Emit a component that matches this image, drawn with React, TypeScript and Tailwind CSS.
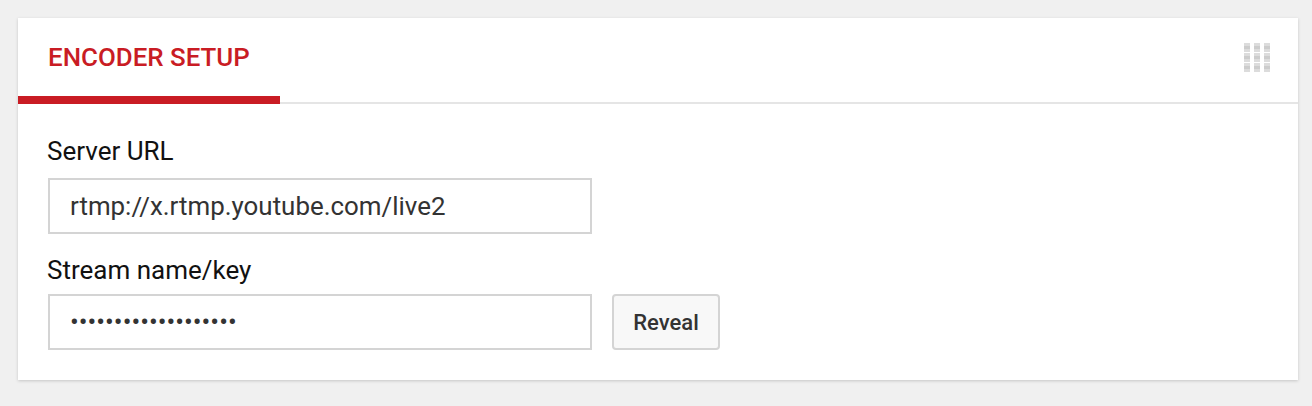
const iconRows = [0, 10, 20];
const iconCols = [0, 10, 20];

function ColumnsIcon() {
  return (
    <svg width="28" height="30" viewBox="0 0 28 30" className="block blur-[0.5px]">
      {iconCols.map((x) =>
        iconRows.map((y) => (
          <g key={`${x}-${y}`}>
            <rect x={x} y={y} width="6" height="9" fill="#dcdcdc" />
            <rect x={x} y={y + 3} width="6" height="3" fill="#cccccc" />
          </g>
        ))
      )}
    </svg>
  );
}

export default function App() {
  return (
    <div className="h-[406px] bg-[#f0f0f0] pl-[18px] pr-[14px] overflow-hidden font-['Roboto',sans-serif]">
      {/* bottom edge of the card above */}
      <div className="h-0 shadow-[0_1px_3px_rgba(0,0,0,0.18)]" />
      <div className="mt-[18px] h-[362px] bg-white shadow-[0_1px_3px_rgba(0,0,0,0.18)]">
        {/* Tab header */}
        <div className="flex h-[86px] justify-between border-b-2 border-[#e5e5e5]">
          <div className="w-[262px] h-[86px] border-b-[8px] border-[#c91c24] pl-[30px] pt-[24px] text-[25.9px] leading-[30px] font-medium text-[#c91c24]">
            ENCODER SETUP
          </div>
          <div className="pt-[25px] pr-[26px]">
            <ColumnsIcon />
          </div>
        </div>

        <div className="pl-[29px] pt-[32px]">
          <div className="text-[26px] leading-[30px] text-[#111]">Server URL</div>
          <div className="mt-[12px] ml-[1px] flex h-[56px] w-[544px] items-center border-2 border-[#d4d4d4] pl-[20px] text-[25.9px] text-[#333]">
            rtmp://x.rtmp.youtube.com/live2
          </div>
          <div className="mt-[21px] text-[26px] leading-[30px] text-[#111]">Stream name/key</div>
          <div className="mt-[9px] ml-[1px] flex items-center gap-[20px]">
            <div className="flex h-[56px] w-[544px] items-center border-2 border-[#d4d4d4] pl-[20px] text-[26px] text-[#333]">
              •••••••••••••••••••
            </div>
            <button className="h-[56px] w-[108px] rounded-[4px] border-2 border-[#d4d4d4] bg-[#f8f8f8] text-[22px] font-medium text-[#333]">
              Reveal
            </button>
          </div>
        </div>
      </div>
    </div>
  );
}
